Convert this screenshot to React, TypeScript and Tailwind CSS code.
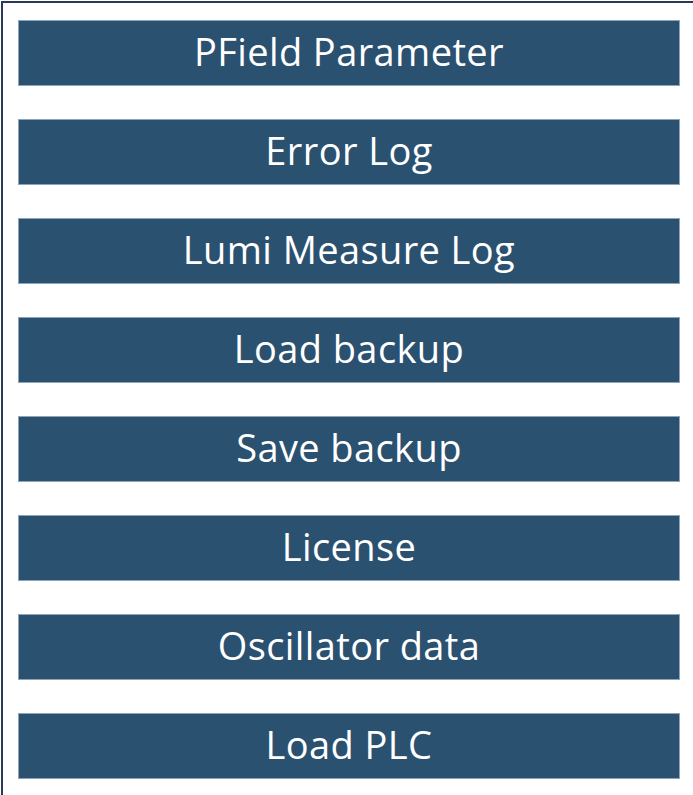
import React from 'react';

const items = [
  'PField Parameter',
  'Error Log',
  'Lumi Measure Log',
  'Load backup',
  'Save backup',
  'License',
  'Oscillator data',
  'Load PLC',
];

const App = () => {
  return (
    <div className="w-[693px] h-[795px] bg-white overflow-hidden">
      <div className="mt-px ml-px h-full border-l-2 border-t-2 border-[#2a3a55] pt-[17px] pl-[15px] flex flex-col gap-[33px]">
        {items.map((label) => (
          <button
            key={label}
            className="w-[662px] h-[66px] pb-[4px] flex items-center justify-center bg-[#2b5170] border border-[#8ea5b8] text-white text-[38px] tracking-[0.4px] leading-none font-['Open_Sans',sans-serif]"
          >
            {label}
          </button>
        ))}
      </div>
    </div>
  );
};

export default App;
